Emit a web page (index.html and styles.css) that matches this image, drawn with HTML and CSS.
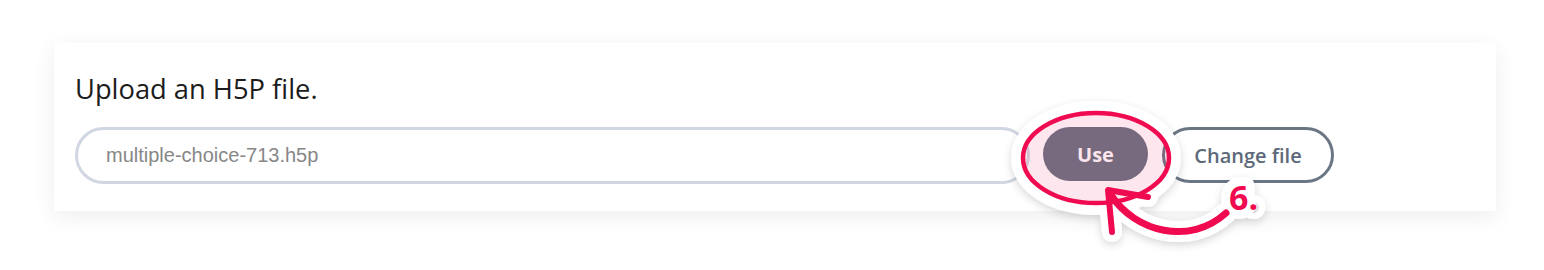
FILE: index.html
```html
<!DOCTYPE html>
<html lang="en">
<head>
<meta charset="utf-8">
<title>Upload H5P</title>
<link rel="stylesheet" href="styles.css">
</head>
<body>
<main class="page">
  <section class="card">
    <h1 class="title">Upload an H5P file.</h1>
    <div class="row">
      <div class="file-input"><span class="file-name">multiple-choice-713.h5p</span></div>
      <button class="btn btn-use" type="button">Use</button>
      <button class="btn btn-change" type="button">Change file</button>
    </div>
  </section>
  <svg class="annotation" width="1544" height="270" viewBox="0 0 1544 270" aria-hidden="true">
    <defs>
      <filter id="sh" x="-20%" y="-20%" width="140%" height="160%">
        <feDropShadow dx="0" dy="3" stdDeviation="4" flood-color="#000" flood-opacity="0.16"/>
      </filter>
      <mask id="hole" maskUnits="userSpaceOnUse" x="0" y="0" width="1544" height="270">
        <rect x="0" y="0" width="1544" height="270" fill="#fff"/>
        <ellipse cx="1096" cy="158" rx="72" ry="44" fill="#000"/>
      </mask>
    </defs>
    <g mask="url(#hole)">
      <g filter="url(#sh)" fill="none" stroke="#fff" stroke-linecap="round" stroke-linejoin="round">
        <ellipse cx="1096" cy="158" rx="73" ry="45" stroke-width="24"/>
        <path d="M1148 197 L1108 190 L1112 232" stroke-width="20"/>
        <path d="M1111 195 C1135 232, 1190 246, 1226 213" stroke-width="21"/>
        <text class="step" x="1229" y="210" stroke-width="18" paint-order="stroke">6.</text>
      </g>
    </g>
    <ellipse cx="1096" cy="158" rx="73" ry="45" fill="#f00a50" fill-opacity="0.1" stroke="none"/>
    <ellipse cx="1096" cy="158" rx="73" ry="45" fill="none" stroke="#f00a50" stroke-width="4.5"/>
    <g fill="none" stroke="#f00a50" stroke-linecap="round" stroke-linejoin="round">
      <path d="M1148 197 L1108 190 L1112 232" stroke-width="6"/>
      <path d="M1111 195 C1135 232, 1190 246, 1226 213" stroke-width="7"/>
    </g>
    <text class="step step-fill" x="1229" y="210">6.</text>
  </svg>
</main>
</body>
</html>
```

FILE: styles.css
```css
* { box-sizing: border-box; }
html, body { margin: 0; padding: 0; background: #ffffff; }
.page {
  position: relative;
  width: 1544px;
  height: 270px;
  padding: 43px 0 0 54px;
  font-family: "Open Sans", "Noto Sans", sans-serif;
}
.card {
  width: 1442px;
  height: 168px;
  background: #ffffff;
  padding: 27px 21px 0 21px;
  box-shadow: 0 6px 22px rgba(0, 0, 0, 0.07);
}
.title {
  margin: 0;
  font-size: 27.3px;
  line-height: 37px;
  font-weight: 400;
  color: #1c1c1c;
}
.row {
  display: flex;
  align-items: flex-start;
  margin-top: 20px;
}
.file-input {
  width: 955px;
  height: 57px;
  border: 3px solid #d0d7e3;
  border-radius: 30px;
  display: flex;
  align-items: center;
  padding-left: 28px;
}
.file-name {
  font-family: "Liberation Sans", Arial, sans-serif;
  font-size: 20px;
  color: #878787;
}
.btn {
  font-family: "Open Sans", "Noto Sans", sans-serif;
  font-size: 20px;
  border-radius: 30px;
  cursor: pointer;
  padding: 0;
}
.btn-use {
  margin-left: 13px;
  width: 105px;
  height: 54px;
  background: #6a7584;
  border: none;
  color: #ffffff;
  font-weight: 700;
}
.btn-change {
  margin-left: 14px;
  width: 172px;
  height: 56px;
  background: #ffffff;
  border: 3px solid #6b7685;
  color: #5d6979;
  font-weight: 600;
}
.annotation {
  position: absolute;
  left: 0;
  top: 0;
  pointer-events: none;
}
.step {
  font-family: "Open Sans", "Noto Sans", sans-serif;
  font-weight: 700;
  font-size: 34px;
  fill: #ffffff;
}
.step-fill {
  fill: #f00a50;
}
```
